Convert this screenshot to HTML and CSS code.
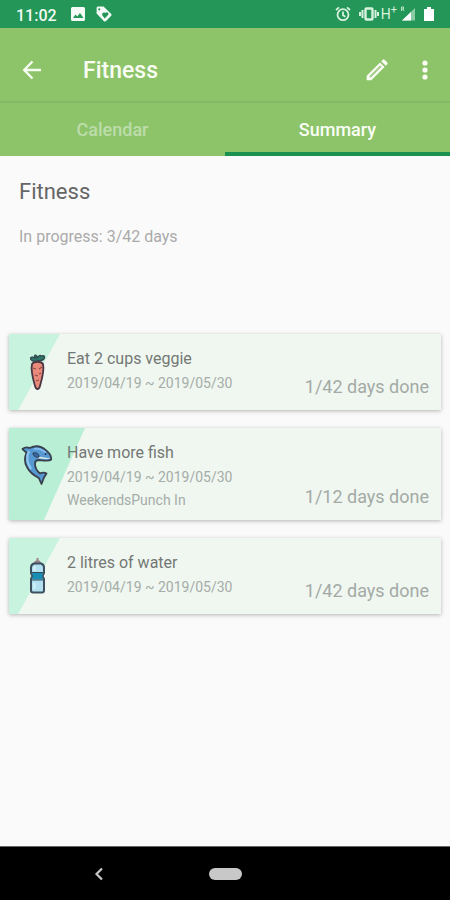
FILE: index.html
```html
<!DOCTYPE html>
<html lang="en">
<head>
<meta charset="utf-8">
<meta name="viewport" content="width=device-width, initial-scale=1">
<title>Fitness</title>
<link rel="stylesheet" href="styles.css">
</head>
<body>
<div class="status">
  <span class="clock">11:02</span>
  <svg class="status-photo" width="14" height="14" viewBox="0 0 14 14"><path fill="#f4fbf6" fill-rule="evenodd" d="M1.500 0h11Q14 0 14 1.500v11Q14 14 12.500 14h-11Q0 14 0 12.500v-11Q0 0 1.500 0zM2 11h10.500L9 6 6.300 9.500 4.500 7.500z"/></svg>
  <svg class="status-tag" width="16" height="16" viewBox="0 0 16 16"><path fill="#f4fbf6" fill-rule="evenodd" d="M2 .5h5.500L15.300 8Q16 9 15.200 9.800L9.800 15.200Q9 16 8 15.200L.6 7.500V2Q.6.700 2 .5zM3.200 2.200a1.100 1.100 0 1 0 .1 0zM8.700 12.500l3.500-3.700c1.200-2-1.400-3.700-2.900-1.900-1.800-1.500-4 .5-2.900 2.500z"/></svg>
  <span class="status-space"></span>
  <svg width="16" height="16" viewBox="0 0 16 16" fill="none" stroke="#d9f2df" stroke-width="1.800"><circle cx="8" cy="8.700" r="5.500"/><path d="M8 5.500v3.700l2.400 1.500M1 4l3-2.600M15 4l-3-2.600"/></svg>
  <svg class="status-vibrate" width="20" height="16" viewBox="0 0 20 16" fill="none" stroke="#d9f2df" stroke-width="2.400"><rect x="6.500" y="2.500" width="7" height="11" rx="1"/><path d="M3.500 4v8M16.500 4v8M1 6v4M19 6v4" stroke-width="2"/></svg>
  <span class="network">H<sup>+</sup></span>
  <svg class="status-signal" width="16" height="16" viewBox="0 0 16 16"><path fill="#8bcba4" d="M15 2v12.500H2z"/><path fill="#fff" d="M11 6v8.500H2z"/><path d="M1.500 5V1h2v2h-2M3 3l1 2" fill="none" stroke="#b8e3c7"/></svg>
  <svg class="status-battery" width="10" height="14" viewBox="0 0 10 14"><path fill="#fff" d="M3 0h4v2h3v12H0V2h3z"/></svg>
</div>

<header>
  <div class="appbar">
    <button class="back" aria-label="Back"><svg width="20" height="20" viewBox="0 0 20 20" fill="none" stroke="#f7fcf0" stroke-width="2.400"><path d="M19 10H3M10.500 1.500L2.200 10l8.300 8.500"/></svg></button>
    <h1>Fitness</h1>
    <button class="edit" aria-label="Edit"><svg width="22" height="22" viewBox="0 0 22 22"><path fill="#fbfdf4" d="M.7 21.300v-4.600L14 3.400l4.600 4.600L5.300 21.300zM15.200 2.200L16.800.7Q17.700 0 18.600.7L21.300 3.400Q22 4.300 21.300 5.200L19.800 6.800z"/><path d="M4 18L14.800 7.200" stroke="#9fcb82" stroke-width="1.800"/></svg></button>
    <button class="more" aria-label="More options"><svg width="6" height="20" viewBox="0 0 6 20" fill="#fbfdf4"><circle cx="3" cy="3" r="2.600"/><circle cx="3" cy="10" r="2.600"/><circle cx="3" cy="17" r="2.600"/></svg></button>
  </div>
  <nav class="tabs">
    <a href="#calendar">Calendar</a>
    <a href="#summary" class="active" aria-current="page">Summary</a>
  </nav>
</header>

<main>
  <section class="intro">
    <h2>Fitness</h2>
    <p>In progress: 3/42 days</p>
  </section>
  <ul class="cards">
    <li class="card">
      <div class="wedge"></div>
      <svg class="icon" width="34" height="44" viewBox="0 0 34 44"><path d="M16 12C12 13 9 11 9.500 9c1-2 3-1 5 0l-1-2c1-2 3 0 3 2 1-3 3-3 4-2 3-1 4 1 2.500 3-2 2-4 2-7 2z" fill="#2d7467" stroke="#34444a" stroke-width="1.200"/><path d="M11 15c2-3 9-3 11 0 1 4-1 15-3 22-1 4-4 4-5 0-2-7-4-18-3-22z" fill="#e98a7b" stroke="#4b3843" stroke-width="1.800"/><path d="M12 19l3 1M21 18l-3 2M14 26l3 1M20 24l-2 1M15 32l3-1" stroke="#8f4a47" stroke-width="1.200"/></svg>
      <div class="details"><h3>Eat 2 cups veggie</h3><p>2019/04/19 ~ 2019/05/30</p></div>
      <span class="done">1/42 days done</span>
    </li>
    <li class="card">
      <div class="wedge wide"></div>
      <svg class="icon" width="34" height="44" viewBox="0 0 34 44"><path d="M1.500 6C4 4 6 4 8.500 5 15 2 20 3 24 6.500c4 3 6.500 7 6.200 10-2 2-7 1-12.200.5-3 0-4 1-4 4 0 4 2 7 5 9.500 2-1 5-1 6.500 0l-2.500 4-2.500 6.500L17.800 35C12 32 8 28 6 24 3 19 4 13 5.500 9.500 4 8 3 8 1.500 6z" fill="#5598d2" stroke="#39404d" stroke-width="1.800" stroke-linejoin="round"/><path d="M8 8c-3 6-2 12 2 18" fill="none" stroke="#8cc5ee" stroke-width="2.400"/><path d="M13 6c5-1 9 1 12 4" fill="none" stroke="#82baf0" stroke-width="2"/><path d="M16 15c4-3 8 1 13 0-1 2-7 1-13 0z" fill="#d6e7e6"/><path d="M12 10c4-1 6 1 6 4-3 1-6-1-6-4z" fill="#3566a6" stroke="#343c4d"/><circle cx="24.500" cy="11" r="1" fill="#29364f"/></svg>
      <div class="details"><h3>Have more fish</h3><p>2019/04/19 ~ 2019/05/30</p><p>WeekendsPunch In</p></div>
      <span class="done">1/12 days done</span>
    </li>
    <li class="card">
      <div class="wedge"></div>
      <svg class="icon" width="34" height="44" viewBox="0 0 34 44"><path d="M12.500 10l2-2.500h1V5h2v2.500h1l2 2.500z" fill="#9b8490"/><path d="M13 10.500h7q3 1 3 4V20l-1.500 3 1.500 3v11.500q0 2-2 2h-9q-2 0-2-2V26l1.500-3-1.500-3v-5.500q0-3 3-4z" fill="#b2e0f0" stroke="#3c505f" stroke-width="2" stroke-linejoin="round"/><path d="M11 20h11l-1 3 1 3.500H11l1-3.500z" fill="#168db3"/><path d="M11 19.500h11M11 27h11" stroke="#344b5b"/><path d="M13.500 13v5M13.500 30v6" stroke="#d2f2f7" stroke-width="2"/></svg>
      <div class="details"><h3>2 litres of water</h3><p>2019/04/19 ~ 2019/05/30</p></div>
      <span class="done">1/42 days done</span>
    </li>
  </ul>
</main>

<footer>
  <button aria-label="System back"><svg width="10" height="14" viewBox="0 0 10 14" fill="none" stroke="#c8c8c8" stroke-width="2.200"><path d="M8 1.500L2.500 7 8 12.500"/></svg></button>
  <button class="home" aria-label="Home"></button>
  <span></span>
</footer>
</body>
</html>
```
FILE: styles.css
```css
* { box-sizing: border-box; }
body {
  margin: 0;
  min-height: 100vh;
  display: flex;
  flex-direction: column;
  background: #fafafa;
  font-family: Roboto, "Liberation Sans", sans-serif;
}
h1, h2, h3, p, ul { margin: 0; padding: 0; font-weight: 400; }
button { border: 0; padding: 0; background: none; display: grid; place-items: center; }
svg { display: block; flex: none; }

.status {
  height: 28px;
  padding: 0 16px;
  display: flex;
  align-items: center;
  background: #239658;
  color: #f1faf3;
}
.clock { font-size: 16px; font-weight: 500; padding-top: 2px; }
.status-photo { margin-left: 14px; }
.status-tag { margin-left: 11px; }
.status-space { flex: 1; }
.status-vibrate { margin-left: 8px; }
.network { margin-left: 2px; font-size: 14px; line-height: 16px; color: #d9f2df; }
.network sup { font-size: 11px; line-height: 0; }
.status-signal { margin-left: 3px; }
.status-battery { margin-left: 8px; }

header { background: #8dc46a; }
.appbar {
  height: 73px;
  padding: 10px 22px 0;
  display: flex;
  align-items: center;
}
.appbar h1 { flex: 1; margin-left: 41px; padding-top: 2px; font-size: 23px; font-weight: 500; color: #f9fdf3; }
.more { margin-left: 34px; }
.tabs {
  height: 55px;
  display: flex;
  border-top: 2px solid #85b965;
}
.tabs a {
  flex: 1;
  display: grid;
  place-items: center;
  padding-top: 3px;
  border-bottom: 4px solid transparent;
  color: #bcdcaa;
  font-size: 18px;
  font-weight: 500;
  text-decoration: none;
}
.tabs .active { color: #fafdf5; border-bottom-color: #1c9251; }

main { flex: 1; }
.intro { padding: 21px 19px 0; height: 178px; }
.intro h2 { font-size: 22px; line-height: 30px; color: #666; }
.intro p { margin-top: 20px; font-size: 16px; line-height: 20px; color: #aaa; }

.cards { padding: 0 9px 18px; list-style: none; display: grid; gap: 18px; }
.card {
  position: relative;
  display: flex;
  align-items: flex-start;
  min-height: 76px;
  padding: 15px 12px 11px;
  background: #eff7f0;
  box-shadow: 0 1px 4px rgba(0, 0, 0, .28);
}
.wedge {
  position: absolute;
  inset: 0 auto 0 0;
  width: 51px;
  background: #c8f3de;
  clip-path: polygon(0 0, 100% 0, 18% 100%, 0 100%);
}
.wedge.wide { width: 76px; background: #b8efd5; clip-path: polygon(0 0, 100% 0, 46% 100%, 0 100%); }
.icon { position: relative; }
.details { position: relative; margin-left: 12px; flex: 1; }
.details h3 { font-size: 16px; line-height: 20px; color: #747875; }
.details p { font-size: 14px; line-height: 20px; color: #a6aca8; }
.details p { margin-top: 3px; }
.details h3 + p { margin-top: 4px; }
.details p:last-child { margin-bottom: -1px; }
.done { align-self: flex-end; font-size: 18px; line-height: 24px; color: #a4aaa6; }

footer {
  height: 54px;
  padding: 0 94px;
  display: grid;
  grid-template-columns: 1fr auto 1fr;
  align-items: center;
  justify-items: start;
  background: #000;
  border-top: 1px solid #666;
}
.home { width: 33px; height: 12px; border-radius: 6px; background: #c8c8c8; }
```
